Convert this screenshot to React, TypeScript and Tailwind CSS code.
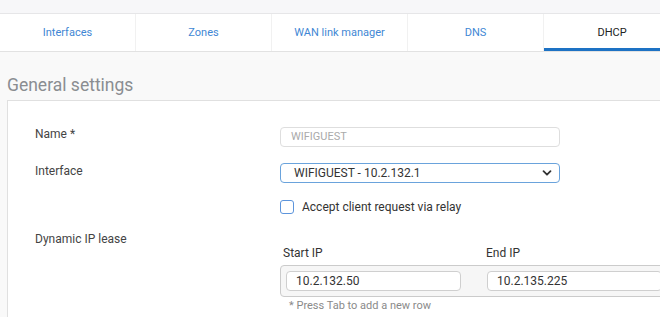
import React from 'react'

const tabs = ['Interfaces', 'Zones', 'WAN link manager', 'DNS', 'DHCP']

const Chevron = () => (
  <svg width="10" height="10" viewBox="0 0 10 10" fill="none">
    <path d="M1.5 3.2 L5 6.7 L8.5 3.2" stroke="#333" strokeWidth="1.8" strokeLinecap="round" strokeLinejoin="round" />
  </svg>
)

export default function App() {
  return (
    <div
      className="w-[660px] h-[317px] overflow-hidden bg-[#f9f9f9] text-[#444]"
      style={{ fontFamily: 'Roboto, "Noto Sans", sans-serif' }}
    >
      {/* top strip */}
      <div className="h-[14px] bg-[#f7f7f9] border-b border-[#e6e6e8]" />

      {/* tab bar */}
      <div className="h-[38px] bg-white border-b border-[#e2e2e2] flex overflow-hidden">
        {tabs.map((t, i) => {
          const active = t === 'DHCP'
          return (
            <div
              key={t}
              className={
                'relative w-[136px] shrink-0 flex items-center justify-center text-[11px] ' +
                (i < tabs.length - 1 ? 'border-r border-[#f1f1f1] ' : '') +
                (active ? 'text-[#222]' : 'text-[#3f87d4]')
              }
            >
              <span className="mt-[2px]">{t}</span>
              {active && <div className="absolute left-0 right-0 bottom-0 h-[3px] bg-[#1d72c4]" />}
            </div>
          )
        })}
      </div>

      {/* content */}
      <div className="pl-[7px] pt-[22px]">
        <h2 className="text-[17.5px] leading-[22px] text-[#8a8d91] font-normal">General settings</h2>

        <div className="mt-[4px] w-[700px] bg-white border-l border-t border-[#e0e0e0] pl-[27px] pt-[26px] pb-[20px]">
          {/* Name */}
          <div className="flex">
            <div className="w-[245px] text-[12px] leading-[16px] -mt-[1px]">Name *</div>
            <div className="w-[280px] h-[20px] border border-[#dedede] rounded-[4px] px-[10px] flex items-center text-[11px] text-[#aaa]">
              WIFIGUEST
            </div>
          </div>

          {/* Interface */}
          <div className="flex mt-[16px]">
            <div className="w-[245px] text-[12px] leading-[16px]">Interface</div>
            <div className="w-[280px] h-[20px] border border-[#6aa3dc] rounded-[4px] pl-[13px] pr-[7px] flex items-center justify-between text-[12px] text-[#333]">
              <span>WIFIGUEST - 10.2.132.1</span>
              <Chevron />
            </div>
          </div>

          {/* Relay checkbox */}
          <div className="flex mt-[17px]">
            <div className="w-[245px]" />
            <div className="flex items-center gap-[8px]">
              <div className="w-[14px] h-[14px] border-[1.5px] border-[#5d95dc] rounded-[3px] bg-white" />
              <span className="text-[12px] text-[#333] leading-[14px]">Accept client request via relay</span>
            </div>
          </div>

          {/* Dynamic IP lease */}
          <div className="flex mt-[17px]">
            <div className="w-[245px] text-[12px] leading-[16px]">Dynamic IP lease</div>
            <div className="pt-[14px]">
              <div className="flex text-[12px] text-[#333] leading-[16px] pl-[3px]">
                <div className="w-[203px]">Start IP</div>
                <div>End IP</div>
              </div>
              <div className="mt-[4px] w-[420px] border border-[#cbcbcb] rounded-[4px] bg-[#f6f6f6] p-[5px] flex gap-[26px]">
                <div className="w-[175px] h-[20px] bg-white border border-[#cfcfcf] rounded-[4px] px-[9px] flex items-center text-[12px] text-[#333]">
                  10.2.132.50
                </div>
                <div className="w-[175px] h-[20px] bg-white border border-[#cfcfcf] rounded-[4px] px-[9px] flex items-center text-[12px] text-[#333]">
                  10.2.135.225
                </div>
              </div>
              <div className="pl-[9px] text-[11px] text-[#8a8a8a] leading-[14px] mt-[2px]">* Press Tab to add a new row</div>
            </div>
          </div>
        </div>
      </div>
    </div>
  )
}
